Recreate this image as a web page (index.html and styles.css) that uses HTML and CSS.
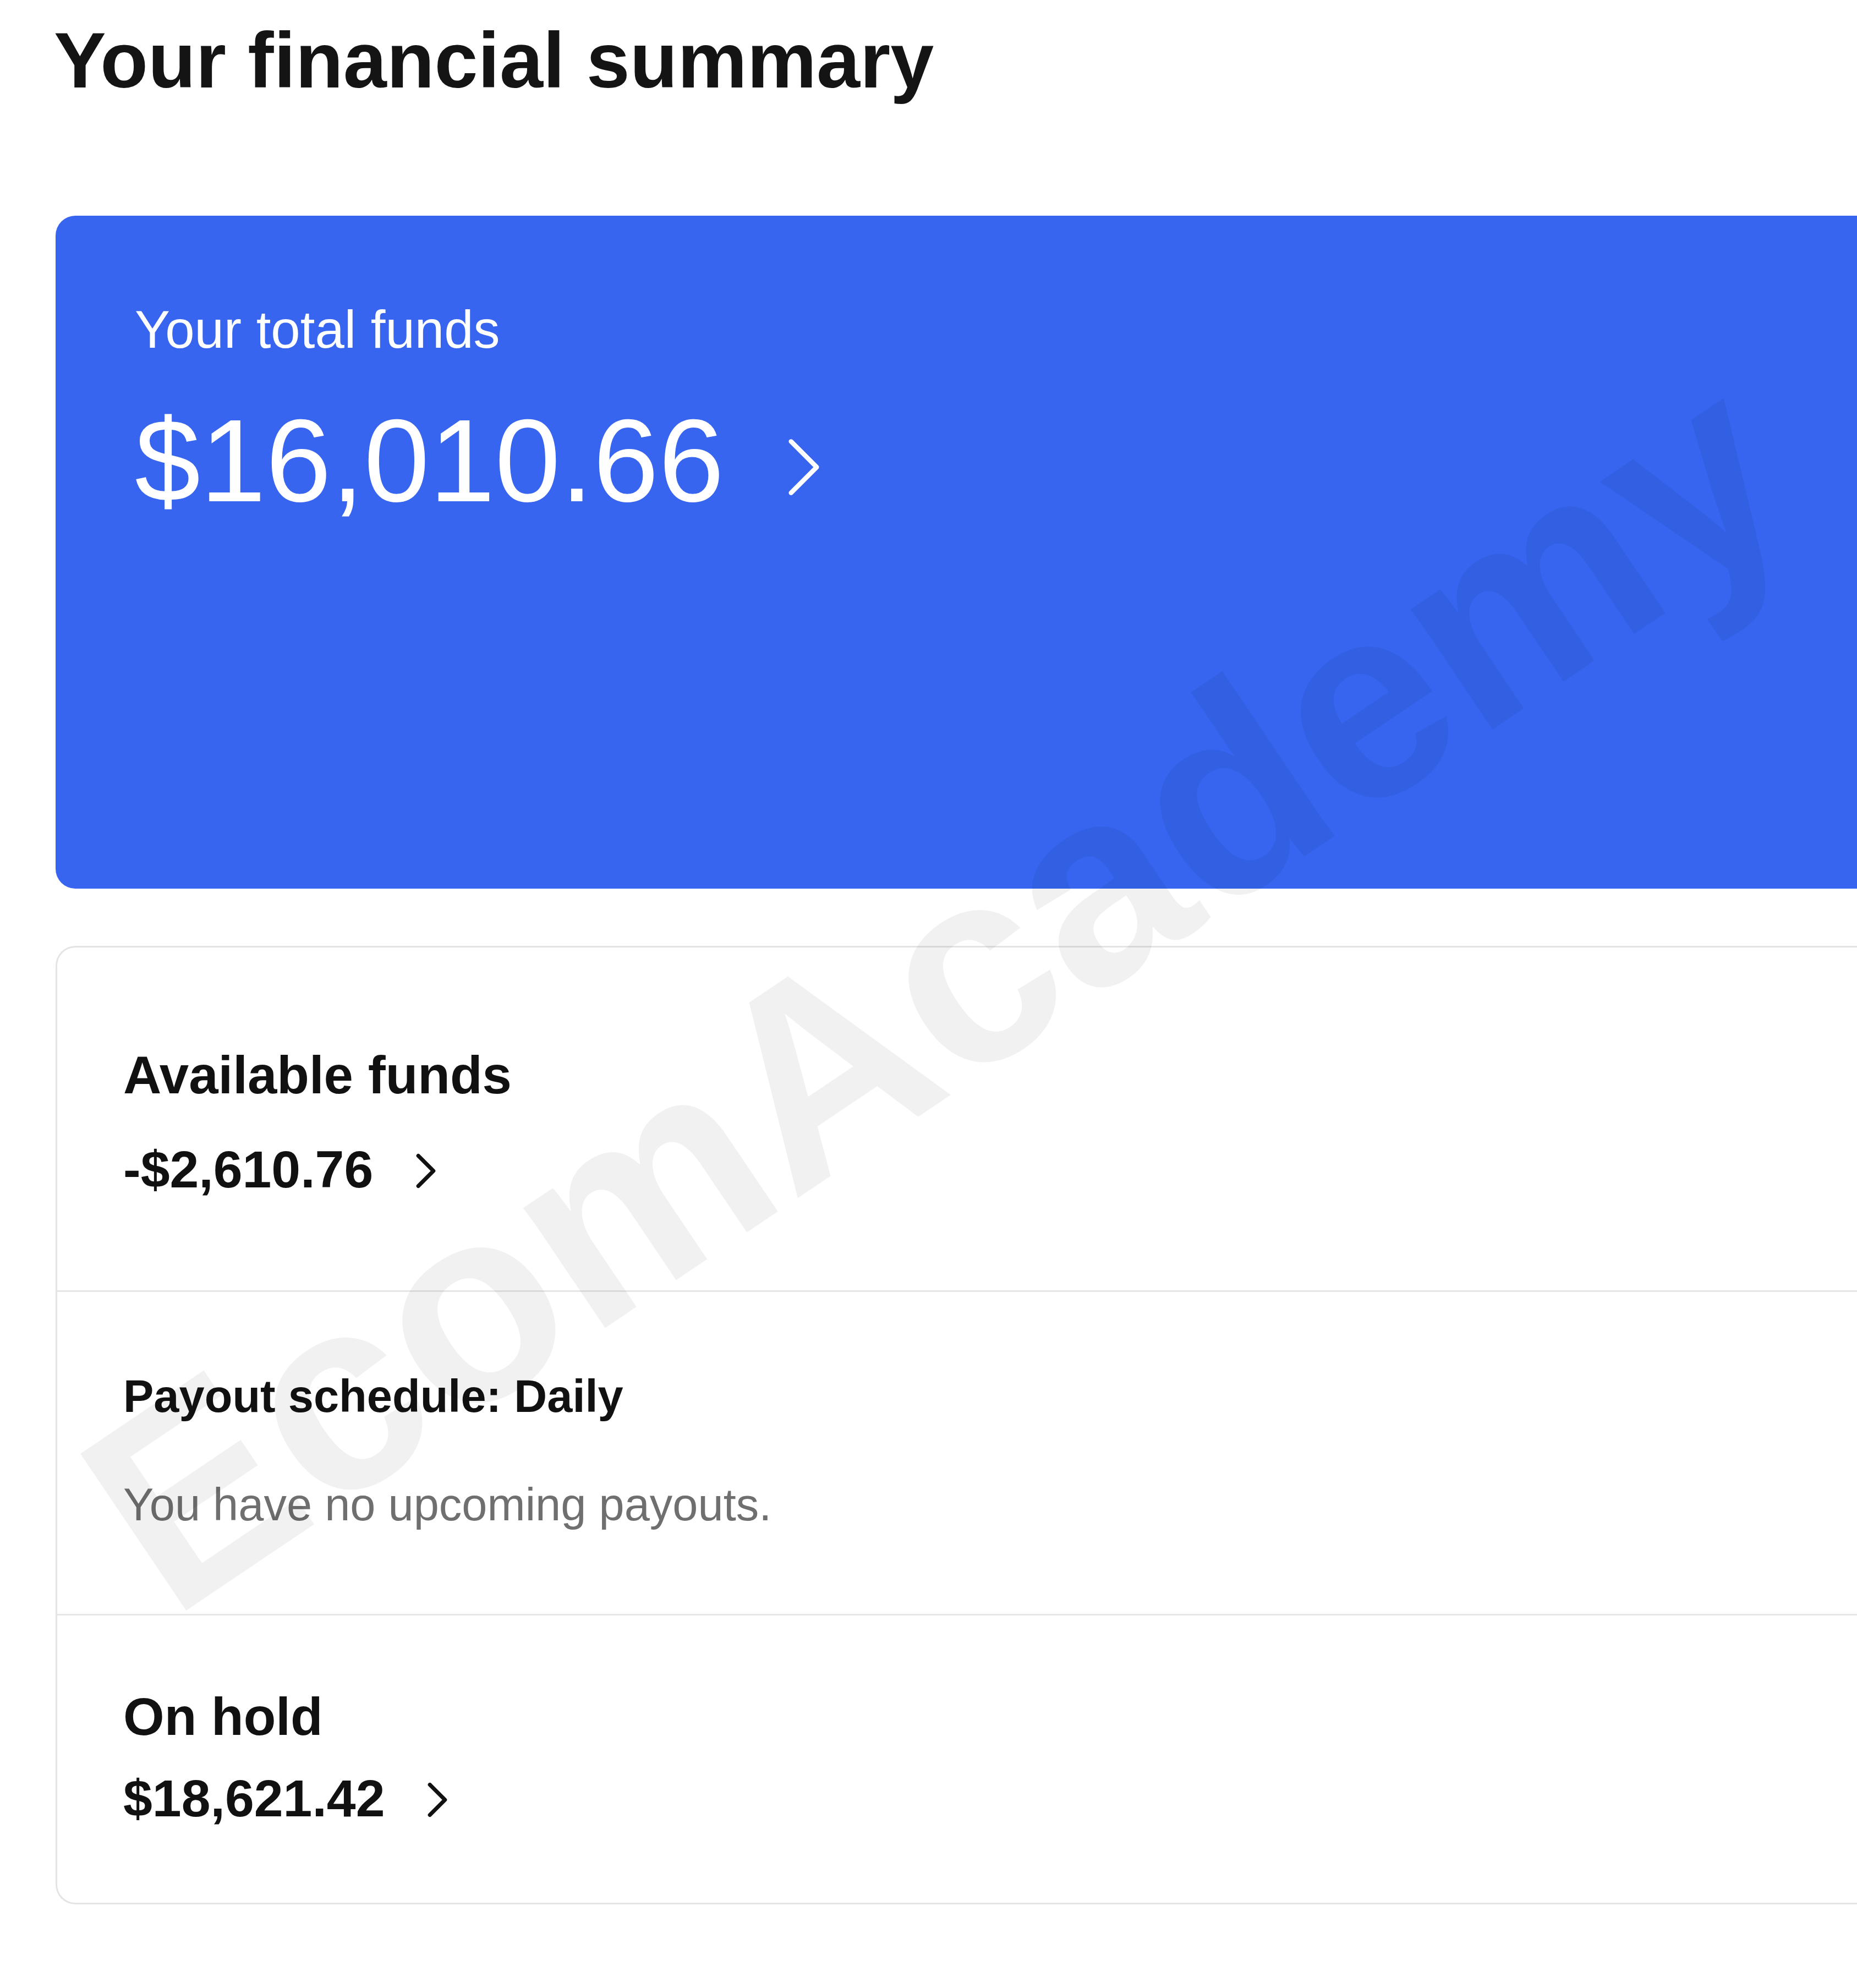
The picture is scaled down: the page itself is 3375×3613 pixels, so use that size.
FILE: index.html
```html
<!DOCTYPE html>
<html lang="en">
<head>
  <meta charset="UTF-8" />
  <meta name="viewport" content="width=device-width, initial-scale=1.0" />
  <title>Your financial summary</title>
  <link rel="stylesheet" href="styles.css">
</head>
<body>
  <main class="page">
    <h1 class="page-title">Your financial summary</h1>

    <section class="total-card">
      <p class="total-label">Your total funds</p>
      <a class="total-amount" href="#">
        <span>$16,010.66</span>
        <svg class="chevron chevron-lg" viewBox="0 0 14 24" aria-hidden="true">
          <path d="M2 2 L12 12 L2 22" />
        </svg>
      </a>
    </section>

    <section class="funds-card">
      <div class="funds-row funds-row-available">
        <h2 class="funds-label">Available funds</h2>
        <a class="funds-amount" href="#">
          <span>-$2,610.76</span>
          <svg class="chevron" viewBox="0 0 14 24" aria-hidden="true">
            <path d="M2 2 L12 12 L2 22" />
          </svg>
        </a>
      </div>
      <div class="funds-row funds-row-payout">
        <h3 class="payout-label">Payout schedule: Daily</h3>
        <p class="payout-note">You have no upcoming payouts.</p>
      </div>
      <div class="funds-row funds-row-hold">
        <h2 class="funds-label">On hold</h2>
        <a class="funds-amount" href="#">
          <span>$18,621.42</span>
          <svg class="chevron" viewBox="0 0 14 24" aria-hidden="true">
            <path d="M2 2 L12 12 L2 22" />
          </svg>
        </a>
      </div>
    </section>
  </main>

  <div class="watermark" aria-hidden="true">EcomAcademy</div>
</body>
</html>
```

FILE: styles.css
```css
* { box-sizing: border-box; }
html, body {
  margin: 0;
  background: #ffffff;
}
body {
  position: relative;
  overflow: hidden;
  font-family: "Liberation Sans", Arial, sans-serif;
  color: #111111;
}
a {
  color: inherit;
  text-decoration: none;
}
.page {
  padding: 25px 0 150px 101px;
}
.page-title {
  margin: 0 0 197px -3px;
  font-size: 142px;
  line-height: 170px;
  font-weight: 700;
  color: #141414;
}

/* blue total card */
.total-card {
  width: 3400px;
  height: 1223px;
  padding: 147px 0 0 144px;
  background: #3765f0;
  border-radius: 36px 0 0 36px;
  color: #ffffff;
}
.total-label {
  margin: 0 0 53px;
  font-size: 96px;
  line-height: 120px;
}
.total-amount {
  display: flex;
  align-items: center;
  gap: 112px;
  font-size: 214px;
  line-height: 250px;
}
.chevron {
  width: 40px;
  height: 66px;
  fill: none;
  stroke: currentColor;
  stroke-width: 2.6;
  stroke-linecap: round;
  stroke-linejoin: round;
}
.chevron-lg {
  width: 66px;
  height: 112px;
  margin-top: 24px;
  stroke-width: 1.8;
}

/* white funds card */
.funds-card {
  width: 3400px;
  margin-top: 104px;
  border: 3px solid #e4e4e4;
  border-right: 0;
  border-radius: 36px 0 0 36px;
  background: #ffffff;
}
.funds-row {
  padding-left: 119px;
  border-bottom: 3px solid #e6e6e6;
}
.funds-row:last-child { border-bottom: 0; }
.funds-row-available { padding: 167px 0 155px 120px; }
.funds-row-payout { padding: 135px 0 143px 120px; }
.funds-row-hold { padding: 119px 0 125px 120px; }

.funds-label {
  margin: 0;
  font-size: 96px;
  line-height: 130px;
  font-weight: 700;
}
.funds-row-available .funds-label { margin-bottom: 41px; }
.funds-row-hold .funds-label { margin-bottom: 18px; }
.funds-amount {
  display: flex;
  align-items: center;
  gap: 76px;
  font-size: 95px;
  line-height: 130px;
  font-weight: 700;
}
.funds-amount .chevron { margin-top: 6px; }

.payout-label {
  margin: 0 0 87px;
  font-size: 83px;
  line-height: 110px;
  font-weight: 700;
}
.payout-note {
  margin: 0;
  font-size: 83px;
  line-height: 110px;
  color: #6f6f6f;
}

/* faint diagonal watermark over the screenshot */
.watermark {
  position: absolute;
  left: 1700px;
  top: 1800px;
  transform: translate(-50%, -50%) rotate(-34deg);
  font-size: 500px;
  line-height: 1;
  font-weight: 700;
  white-space: nowrap;
  color: rgba(0, 0, 0, 0.055);
  pointer-events: none;
}
```
